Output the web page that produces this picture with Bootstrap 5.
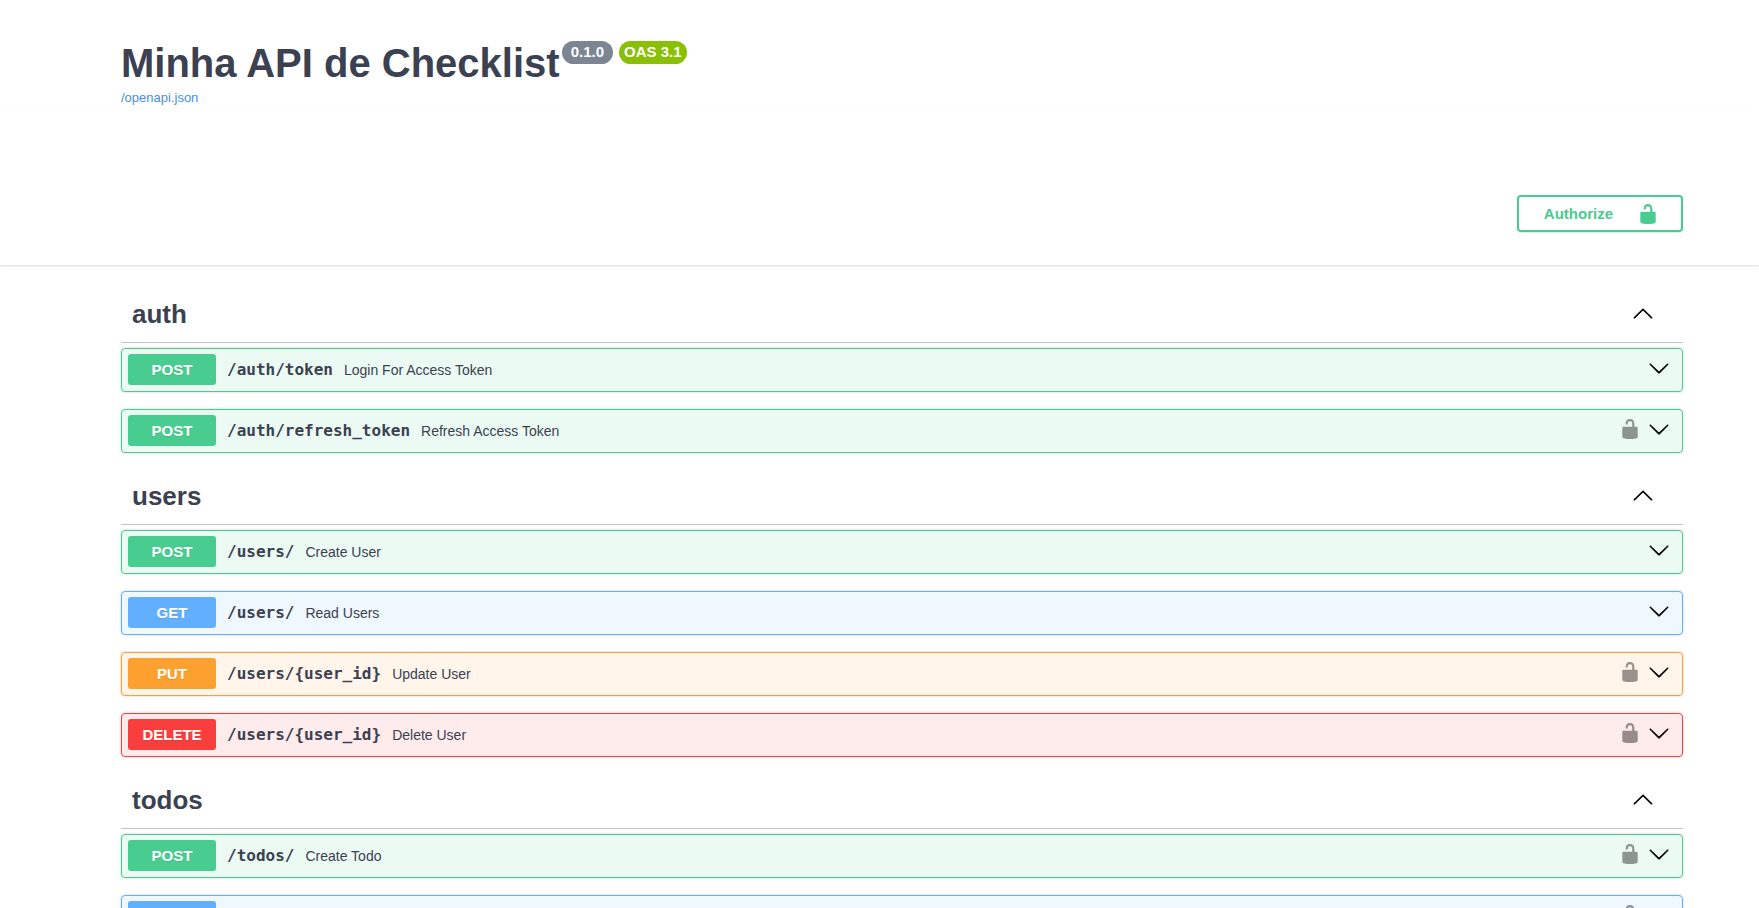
<!DOCTYPE html>
<html lang="en">
<head>
<meta charset="utf-8">
<meta name="viewport" content="width=device-width, initial-scale=1">
<title>Minha API de Checklist</title>
<link href="https://cdn.jsdelivr.net/npm/bootstrap@5.3.0/dist/css/bootstrap.min.css" rel="stylesheet">
<style>
  body { font-family: "Liberation Sans", Arial, sans-serif; color: #3b4151; background: #fff; }
  .wrap { padding-left: 121px; padding-right: 76px; }
  .info { padding-top: 39px; }
  .info-title { font-size: 40px; line-height: 48px; font-weight: 700; }
  .pills { gap: 6px; margin: 2px 0 0 2px; }
  .pill { font-size: 15px; line-height: 19px; font-weight: 700; color: #fff; padding: 1px 9px 3px; }
  .pill-version { background: #7d8492; }
  .pill-oas { background: #89bf04; padding-left: 5px; padding-right: 5px; }
  .spec-link { font-size: 13px; line-height: 22px; color: #4990e2; }
  .scheme { padding-top: 86px; padding-bottom: 33px; box-shadow: 0 1px 2px rgba(0,0,0,.15); }
  .authorize { --bs-btn-color: #49cc90; --bs-btn-border-color: #49cc90; --bs-btn-hover-color: #49cc90; --bs-btn-hover-border-color: #49cc90;
    border-width: 2px; border-radius: 4px; font-size: 15px; line-height: 22px; font-weight: 700; padding: 6px 22px 5px 25px; gap: 24px; height: 37px; box-shadow: 0 1px 2px rgba(0,0,0,.1); }
  .icon { width: 22px; height: 22px; fill: currentColor; display: block; flex: none; }
  .ops { padding-top: 23px; }
  .tag-head { height: 55px; padding: 0 29px 2px 11px; border-bottom: 1px solid #c4c6cb; margin-bottom: 5px; }
  .tag-name { font-size: 26px; line-height: 32px; font-weight: 700; }
  .plain { background: none; border: 0; padding: 0; color: inherit; }
  .arrow { color: #000; }
  .lift { padding-bottom: 4px; }
  .tag-head .lift { padding-bottom: 3px; }
  .op { --tone: 73,204,144; height: 44px; padding: 0 12px 1px 6px; margin-bottom: 17px; border: 1px solid rgb(var(--tone)); border-radius: 4px; background: rgba(var(--tone),.1); box-shadow: 0 0 3px rgba(0,0,0,.19); gap: 7px; }
  .op-get { --tone: 97,175,254; }
  .op-put { --tone: 252,161,48; }
  .op-delete { --tone: 249,62,62; }
  .verb { width: 88px; height: 31px; line-height: 31px; border-radius: 3px; background: rgb(var(--tone)); color: #fff; font-size: 15px; font-weight: 700; text-shadow: 0 1px 0 rgba(0,0,0,.1); }
  .route { font-family: "DejaVu Sans Mono", monospace; font-size: 16px; line-height: 20px; font-weight: 700; }
  .desc { font-size: 14px; line-height: 20px; }
  .op-main { gap: 11px; }
  .lock { color: #000; opacity: .4; }
</style>
</head>
<body>
<svg class="d-none" aria-hidden="true">
  <symbol id="unlocked" viewBox="0 0 20 20"><path d="M15.8 8H14V5.6C14 2.703 12.665 1 10 1 7.334 1 6 2.703 6 5.6V6h2v-.801C8 3.754 8.797 3 10 3c1.203 0 2 .754 2 2.199V8H4c-.553 0-1 .646-1 1.199V17c0 .549.428 1.139.951 1.307l1.197.387C5.672 18.861 6.55 19 7.1 19h5.8c.549 0 1.428-.139 1.951-.307l1.196-.387c.524-.167.953-.757.953-1.306V9.199C17 8.646 16.352 8 15.8 8z"/></symbol>
  <symbol id="down" viewBox="0 0 20 20"><path d="M17.418 6.109c.272-.268.709-.268.979 0s.271.701 0 .969l-7.908 7.83c-.27.268-.707.268-.979 0l-7.908-7.83c-.27-.268-.27-.701 0-.969.271-.268.709-.268.979 0L10 13.25l7.418-7.141z"/></symbol>
  <symbol id="up" viewBox="0 0 20 20"><path d="M17.418 14.908c.272.268.709.268.979 0s.271-.701 0-.969l-7.908-7.83c-.27-.268-.707-.268-.979 0l-7.908 7.83c-.27.268-.27.701 0 .969.271.268.709.268.979 0L10 7.767l7.418 7.141z"/></symbol>
</svg>

<header class="wrap info">
  <div class="d-flex align-items-start">
    <h1 class="info-title m-0">Minha API de Checklist</h1>
    <div class="pills d-flex">
      <span class="pill pill-version rounded-pill">0.1.0</span>
      <span class="pill pill-oas rounded-pill">OAS 3.1</span>
    </div>
  </div>
  <a class="spec-link d-block text-decoration-none" href="#">/openapi.json</a>
</header>

<section class="wrap scheme d-flex justify-content-end">
  <button type="button" class="btn authorize d-flex align-items-center">Authorize
    <svg class="icon"><use href="#unlocked"/></svg></button>
</section>

<main class="wrap ops">
  <section>
    <div class="tag-head d-flex align-items-center justify-content-between">
      <h2 class="tag-name m-0">auth</h2>
      <button type="button" class="plain arrow lift" aria-label="Collapse auth"><svg class="icon"><use href="#up"/></svg></button>
    </div>
    <div class="op d-flex align-items-center">
      <button type="button" class="plain op-main d-flex align-items-center flex-grow-1"><span class="verb">POST</span><span class="route">/auth/token</span><span class="desc">Login For Access Token</span></button>
      <button type="button" class="plain arrow lift" aria-label="Expand"><svg class="icon"><use href="#down"/></svg></button>
    </div>
    <div class="op d-flex align-items-center">
      <button type="button" class="plain op-main d-flex align-items-center flex-grow-1"><span class="verb">POST</span><span class="route">/auth/refresh_token</span><span class="desc">Refresh Access Token</span></button>
      <button type="button" class="plain lock lift" aria-label="Authorization"><svg class="icon"><use href="#unlocked"/></svg></button>
      <button type="button" class="plain arrow lift" aria-label="Expand"><svg class="icon"><use href="#down"/></svg></button>
    </div>
  </section>

  <section>
    <div class="tag-head d-flex align-items-center justify-content-between">
      <h2 class="tag-name m-0">users</h2>
      <button type="button" class="plain arrow lift" aria-label="Collapse users"><svg class="icon"><use href="#up"/></svg></button>
    </div>
    <div class="op d-flex align-items-center">
      <button type="button" class="plain op-main d-flex align-items-center flex-grow-1"><span class="verb">POST</span><span class="route">/users/</span><span class="desc">Create User</span></button>
      <button type="button" class="plain arrow lift" aria-label="Expand"><svg class="icon"><use href="#down"/></svg></button>
    </div>
    <div class="op op-get d-flex align-items-center">
      <button type="button" class="plain op-main d-flex align-items-center flex-grow-1"><span class="verb">GET</span><span class="route">/users/</span><span class="desc">Read Users</span></button>
      <button type="button" class="plain arrow lift" aria-label="Expand"><svg class="icon"><use href="#down"/></svg></button>
    </div>
    <div class="op op-put d-flex align-items-center">
      <button type="button" class="plain op-main d-flex align-items-center flex-grow-1"><span class="verb">PUT</span><span class="route">/users/{user_id}</span><span class="desc">Update User</span></button>
      <button type="button" class="plain lock lift" aria-label="Authorization"><svg class="icon"><use href="#unlocked"/></svg></button>
      <button type="button" class="plain arrow lift" aria-label="Expand"><svg class="icon"><use href="#down"/></svg></button>
    </div>
    <div class="op op-delete d-flex align-items-center">
      <button type="button" class="plain op-main d-flex align-items-center flex-grow-1"><span class="verb">DELETE</span><span class="route">/users/{user_id}</span><span class="desc">Delete User</span></button>
      <button type="button" class="plain lock lift" aria-label="Authorization"><svg class="icon"><use href="#unlocked"/></svg></button>
      <button type="button" class="plain arrow lift" aria-label="Expand"><svg class="icon"><use href="#down"/></svg></button>
    </div>
  </section>

  <section>
    <div class="tag-head d-flex align-items-center justify-content-between">
      <h2 class="tag-name m-0">todos</h2>
      <button type="button" class="plain arrow lift" aria-label="Collapse todos"><svg class="icon"><use href="#up"/></svg></button>
    </div>
    <div class="op d-flex align-items-center">
      <button type="button" class="plain op-main d-flex align-items-center flex-grow-1"><span class="verb">POST</span><span class="route">/todos/</span><span class="desc">Create Todo</span></button>
      <button type="button" class="plain lock lift" aria-label="Authorization"><svg class="icon"><use href="#unlocked"/></svg></button>
      <button type="button" class="plain arrow lift" aria-label="Expand"><svg class="icon"><use href="#down"/></svg></button>
    </div>
    <div class="op op-get d-flex align-items-center">
      <button type="button" class="plain op-main d-flex align-items-center flex-grow-1" aria-label="GET"><span class="verb"></span></button>
      <button type="button" class="plain lock lift" aria-label="Authorization"><svg class="icon"><use href="#unlocked"/></svg></button>
      <button type="button" class="plain arrow lift" aria-label="Expand"><svg class="icon"><use href="#down"/></svg></button>
    </div>
  </section>
</main>
<script src="https://cdn.jsdelivr.net/npm/bootstrap@5.3.0/dist/js/bootstrap.bundle.min.js"></script>
</body>
</html>
